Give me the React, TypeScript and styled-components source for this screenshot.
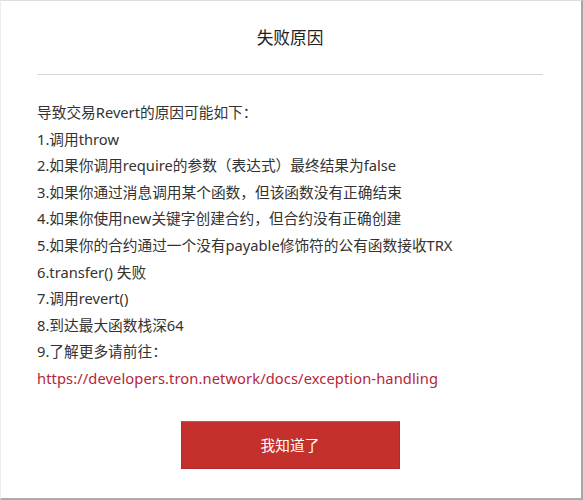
import React from "react";
import styled, { createGlobalStyle } from "styled-components";

const Global = createGlobalStyle`
  html, body {
    margin: 0;
    padding: 0;
    background: #ffffff;
  }
  body {
    font-family: "Noto Sans", "Noto Sans CJK SC", sans-serif;
  }
`;

const Frame = styled.div`
  width: 583px;
  height: 500px;
  box-sizing: border-box;
  border-top: 1px solid #dedede;
  border-left: 1px solid #ececec;
  border-right: 2px solid #a6a6a6;
  border-bottom: 2px solid #ababab;
  padding: 0 38px 0 36px;
  display: flex;
  flex-direction: column;
  color: #333333;
`;

const Title = styled.h2`
  margin: 25px 0 0;
  font-size: 16.7px;
  font-weight: 400;
  line-height: 24px;
  text-align: center;
  color: #222222;
`;

const Divider = styled.hr`
  margin: 24px 0 0;
  border: none;
  border-top: 1px solid #d6d6d6;
`;

const Reasons = styled.div`
  margin-top: 24px;
  font-size: 14.7px;
  line-height: 26.6px;
`;

const Line = styled.div`
  white-space: nowrap;
`;

const DocLink = styled.a`
  color: #b52638;
  text-decoration: none;
  letter-spacing: 0.09px;
`;

const Confirm = styled.button`
  align-self: center;
  margin-top: 29px;
  width: 219px;
  height: 48px;
  border: 1px solid #b8282a;
  border-top-color: #d0504a;
  background: #c4302b;
  color: #ffffff;
  font-family: "Noto Sans CJK SC", sans-serif;
  font-size: 14.7px;
  cursor: pointer;
`;

const reasons = [
  "导致交易Revert的原因可能如下：",
  "1.调用throw",
  "2.如果你调用require的参数（表达式）最终结果为false",
  "3.如果你通过消息调用某个函数，但该函数没有正确结束",
  "4.如果你使用new关键字创建合约，但合约没有正确创建",
  "5.如果你的合约通过一个没有payable修饰符的公有函数接收TRX",
  "6.transfer() 失败",
  "7.调用revert()",
  "8.到达最大函数栈深64",
  "9.了解更多请前往：",
];

const DOC_URL = "https://developers.tron.network/docs/exception-handling";

export default function App() {
  return (
    <>
      <Global />
      <Frame>
        <Title>失败原因</Title>
        <Divider />
        <Reasons>
          {reasons.map((r) => (
            <Line key={r}>{r}</Line>
          ))}
          <Line>
            <DocLink href={DOC_URL}>{DOC_URL}</DocLink>
          </Line>
        </Reasons>
        <Confirm type="button">我知道了</Confirm>
      </Frame>
    </>
  );
}
